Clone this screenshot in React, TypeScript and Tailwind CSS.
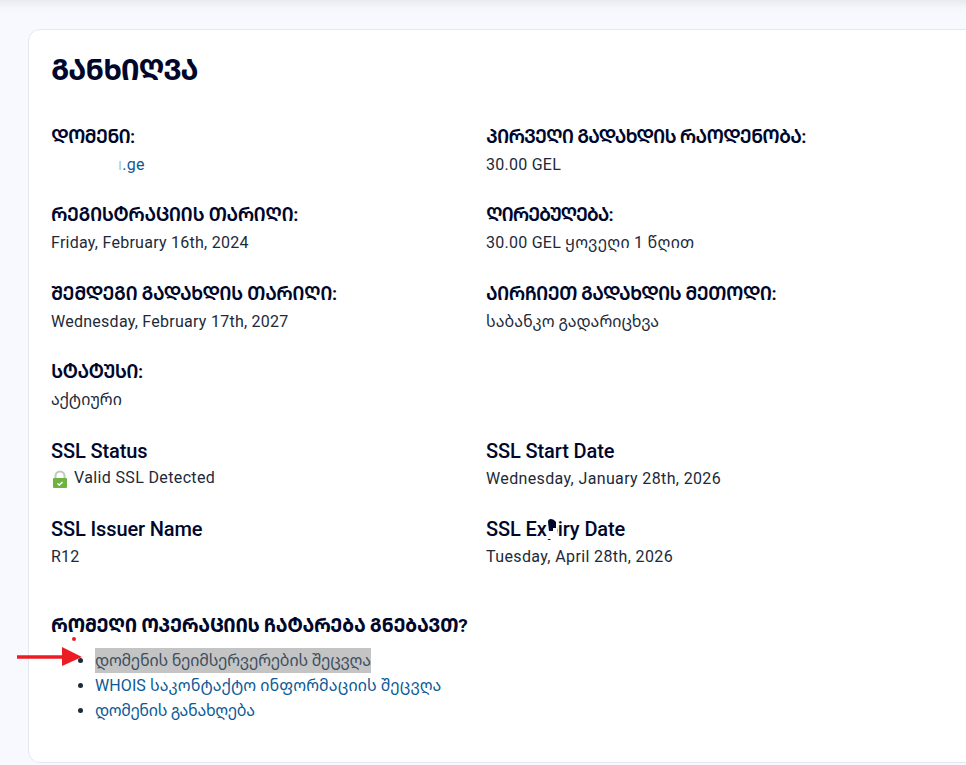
function Field({
  label,
  children,
  georgian = true,
  labelClass = "tracking-[-0.5px]",
  valueClass = "tracking-[0.26px]",
}: {
  label: string;
  children: React.ReactNode;
  georgian?: boolean;
  labelClass?: string;
  valueClass?: string;
}) {
  return (
    <div className="h-[78.4px]">
      <h4
        className={`leading-[24px] text-[#00072b] ${
          georgian ? `text-[19px] font-semibold ${labelClass}` : "text-[20px] font-medium tracking-[-0.12px]"
        }`}
      >
        {label}
      </h4>
      <div className={`mt-[4px] text-[16px] leading-[24px] text-[#1c2a3a] ${valueClass}`}>{children}</div>
    </div>
  );
}

function LockIcon() {
  return (
    <svg width="16" height="19" viewBox="0 0 16 19" className="ml-[1px] mr-[6px] mt-[4px] shrink-0">
      <path d="M3.5 9V6a4.5 4.5 0 0 1 9 0v3" fill="none" stroke="#c3c7c3" strokeWidth="2" />
      <rect x="1" y="8" width="14" height="10" rx="1" fill="#6db33f" />
      <path d="M5.5 13.5l1.8 1.6 3.2-3.2" fill="none" stroke="#fff" strokeWidth="1.4" />
    </svg>
  );
}

export default function App() {
  return (
    <div className="h-[765px] overflow-hidden bg-[#f8f9fe] font-['Roboto','Noto_Sans_Georgian','DejaVu_Sans',sans-serif]">
      <div className="h-[15px] bg-gradient-to-b from-[#e9eaf0] via-[#f5f6fb] to-[#f8f9fe]" />
      <div className="relative ml-[28px] mt-[14px] h-[734px] w-[1000px] rounded-[12px] border border-[#e4e8f5] bg-white pl-[22px] pt-[20px]">
        <h2 className="text-[29px] leading-[40px] font-bold tracking-[-1px] text-[#00072b]">ᲒᲐᲜᲮᲘᲦᲕᲐ</h2>

        <div className="mt-[35px] grid w-[870px] grid-cols-2">
          <Field label="ᲓᲝᲛᲔᲜᲘ:" labelClass="tracking-[-0.8px]">
            <span className="pl-[67px] text-[#9fcdf0]">ı</span>
            <span className="text-[#0b5a96]">.ge</span>
          </Field>
          <Field label="ᲞᲘᲠᲕᲔᲦᲘ ᲒᲐᲓᲐᲮᲓᲘᲡ ᲠᲐᲝᲓᲔᲜᲝᲑᲐ:" labelClass="tracking-[-0.83px]">30.00 GEL</Field>
          <Field label="ᲠᲔᲒᲘᲡᲢᲠᲐᲪᲘᲘᲡ ᲗᲐᲠᲘᲦᲘ:">Friday, February 16th, 2024</Field>
          <Field label="ᲦᲘᲠᲔᲑᲣᲦᲔᲑᲐ:" labelClass="tracking-[-1.1px]">30.00 GEL ყოვეღი 1 წღით</Field>
          <Field label="ᲨᲔᲛᲓᲔᲒᲘ ᲒᲐᲓᲐᲮᲓᲘᲡ ᲗᲐᲠᲘᲦᲘ:">Wednesday, February 17th, 2027</Field>
          <Field label="ᲐᲘᲠᲩᲘᲔᲗ ᲒᲐᲓᲐᲮᲓᲘᲡ ᲛᲔᲗᲝᲓᲘ:" labelClass="tracking-[-0.66px]" valueClass="">საბანკო გადარიცხვა</Field>
          <Field label="ᲡᲢᲐᲢᲣᲡᲘ:" labelClass="tracking-[-0.6px]" valueClass="">აქტიური</Field>
          <div />
          <Field label="SSL Status" georgian={false} valueClass="tracking-[0.36px] -translate-y-px">
            <div className="flex">
              <LockIcon />
              Valid SSL Detected
            </div>
          </Field>
          <Field label="SSL Start Date" georgian={false} valueClass="tracking-[0.36px]">Wednesday, January 28th, 2026</Field>
          <Field label="SSL Issuer Name" georgian={false}>R12</Field>
          <Field label="SSL Expiry Date" georgian={false} valueClass="tracking-[0.38px]">Tuesday, April 28th, 2026</Field>
        </div>

        <h4 className="mt-[19px] text-[19px] leading-[24px] font-bold tracking-[-0.36px] text-[#00072b]">
          ᲠᲝᲛᲔᲦᲘ ᲝᲞᲔᲠᲐᲪᲘᲘᲡ ᲩᲐᲢᲐᲠᲔᲑᲐ ᲒᲜᲔᲑᲐᲕᲗ?
        </h4>
        <ul className="mt-[10px] list-disc pl-[44px] text-[16px] leading-[25px] text-[#0b5a96] marker:text-[#1c2a3a]">
          <li>
            <span className="inline-block bg-[#c4c4c4] tracking-[-0.17px] text-[#3d4f60]">დომენის ნეიმსერვერების შეცვღა</span>
          </li>
          <li className="tracking-[0.09px]">WHOIS საკონტაქტო ინფორმაციის შეცვღა</li>
          <li className="tracking-[-0.3px]">დომენის განახღება</li>
        </ul>

        {/* annotation arrow + stray dot */}
        <svg width="70" height="24" viewBox="0 0 70 24" className="absolute left-[-12px] top-[615px]">
          <path d="M0 12H46" stroke="#ec1c24" strokeWidth="3.5" />
          <path d="M45 2L65 12L45 21Z" fill="#ec1c24" />
        </svg>
        <span className="absolute left-[43px] top-[607px] h-[4px] w-[4px] rounded-full bg-[#ec1c24]" />

        {/* cursor smudge over the "p" of Expiry */}
        <svg width="10" height="20" viewBox="0 0 10 20" className="absolute left-[518px] top-[489px]">
          <rect width="10" height="20" fill="#fff" />
          <path d="M1 3Q1 0 4 0T9 3L9 9L6 9L6 12L2 12Z" fill="#00072b" />
        </svg>
      </div>
    </div>
  );
}
